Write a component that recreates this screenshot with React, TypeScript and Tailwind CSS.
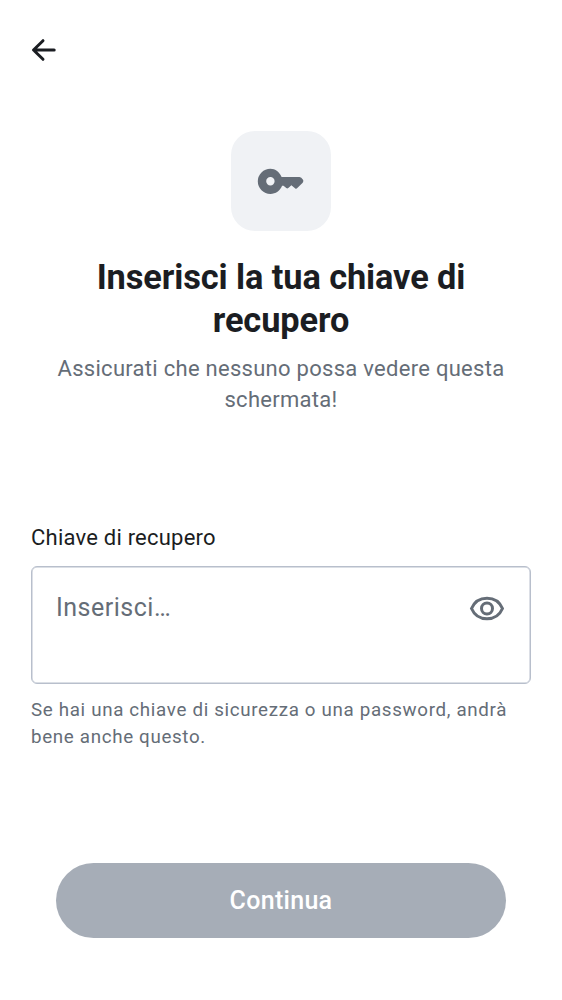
export default function App() {
  return (
    <main className="flex h-[1000px] w-full flex-col bg-white font-['Roboto',sans-serif] text-[#1b1d22]">
      <header className="flex h-[100px] items-center pl-[31px]">
        <button aria-label="Indietro">
          <svg className="block" width="25" height="24" viewBox="0 0 25 24" fill="none" stroke="currentColor" strokeWidth="3" strokeLinecap="round" strokeLinejoin="round"><path d="M23.200 12H2.700M12 2.700L2.500 12l9.500 9.300" /></svg>
        </button>
      </header>
      <section className="flex flex-col items-center pt-[31px] text-center">
        <div className="flex size-[100px] items-center justify-center rounded-[24px] bg-[#f0f2f5] text-[#656d77]">
          <svg width="50" height="50" viewBox="0 0 50 50" fill="currentColor"><path fillRule="evenodd" d="M14.400 12.700C19.300 12.700 23.700 16 25.600 21H43.500L45.300 21.800 46.800 23.600C47.600 24.600 47.500 25.700 46.700 26.700L41.300 32.100C40.500 32.900 39.800 32.900 39 32.200L35.400 29.300 32.300 32.100C31.600 32.700 31 32.700 30.300 32.100L27.500 29.700H26.100C24.200 34.600 19.700 37.900 14.400 37.900A12.600 12.600 0 1 1 14.400 12.700ZM14.400 21.100A4.200 4.200 0 1 0 14.400 29.500A4.200 4.200 0 1 0 14.400 21.100Z" /></svg>
        </div>
        <h1 className="mt-[25px] text-[34.375px] leading-[42.500px] font-bold tracking-[-0.1px]">Inserisci la tua chiave di<br />recupero</h1>
        <p className="mt-[12px] text-[22px] leading-[31px] tracking-[0.28px] text-[#656d77]">Assicurati che nessuno possa vedere questa<br />schermata!</p>
      </section>
      <section className="mt-[107px] px-[31px]">
        <label className="block text-[22px] leading-[31px] tracking-[0.22px]">Chiave di recupero</label>
        <div className="mt-[13px] flex h-[118px] items-start justify-between rounded-[6px] border border-[#b8bfcc] px-[24px] pt-[23px] shadow-[inset_0_0_0_0.500px_#b8bfcc]">
          <span className="text-[25px] leading-[36px] tracking-[0.500px] text-[#656d77]">Inserisci…</span>
          <svg className="mt-[6px] mr-px" width="36" height="26" viewBox="0 0 36 26" fill="none" stroke="#656d77" strokeWidth="3"><path d="M2.500 12.500C5.500 5.500 11 2.200 18 2.200S30.500 5.500 33.500 12.500C30.500 19.500 25 22.800 18 22.800S5.500 19.500 2.500 12.500Z" /><circle cx="18" cy="12.500" r="5.500" /></svg>
        </div>
        <p className="mt-[13px] text-[18.750px] leading-[26.500px] tracking-[0.670px] text-[#656d77]">Se hai una chiave di sicurezza o una password, andrà<br />bene anche questo.</p>
      </section>
      <footer className="mt-auto px-[56px] pb-[62.500px]">
        <button className="h-[75px] w-full rounded-full bg-[#a6adb7] pt-px text-[25px] font-medium tracking-[0.3px] text-white">Continua</button>
      </footer>
    </main>
  );
}
